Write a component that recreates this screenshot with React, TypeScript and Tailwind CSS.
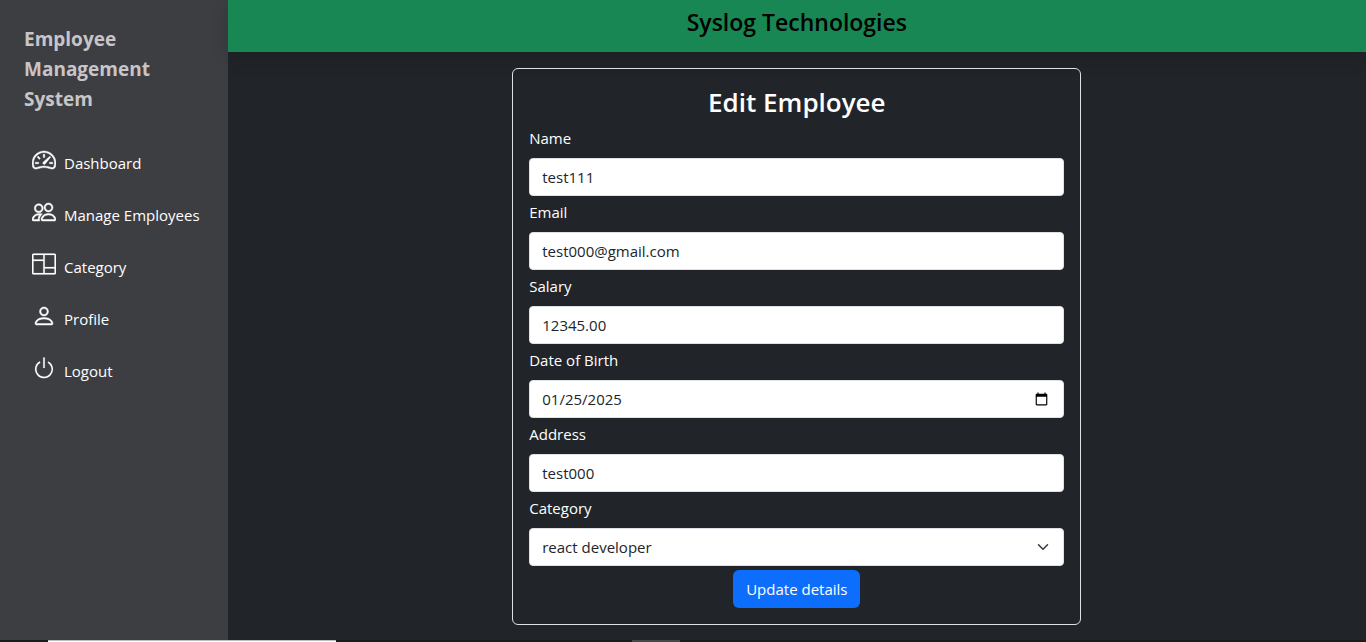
import { useState } from "react";
import type { IconType } from "react-icons";
import { BsColumns, BsPeople, BsPerson, BsPower, BsSpeedometer2 } from "react-icons/bs";

const links: { label: string; Icon: IconType; weight: string }[] = [
  { label: "Dashboard", Icon: BsSpeedometer2, weight: "[stroke-width:0.3]" },
  { label: "Manage Employees", Icon: BsPeople, weight: "[stroke-width:0.3]" },
  { label: "Category", Icon: BsColumns, weight: "[stroke-width:0.1]" },
  { label: "Profile", Icon: BsPerson, weight: "[stroke-width:0.3]" },
  { label: "Logout", Icon: BsPower, weight: "[stroke-width:0.1]" },
];

const fields = [
  { id: "name", label: "Name", type: "text", value: "test111" },
  { id: "email", label: "Email", type: "email", value: "test000@gmail.com" },
  { id: "salary", label: "Salary", type: "text", value: "12345.00" },
  { id: "dob", label: "Date of Birth", type: "date", value: "2025-01-25" },
  { id: "address", label: "Address", type: "text", value: "test000" },
];

const controlClass =
  "block h-[38px] w-full rounded border border-[#dee2e6] bg-white px-3 text-[15px] leading-6 text-[#212529]";

const dateClass =
  "[&::-webkit-datetime-edit-month-field]:p-0 [&::-webkit-datetime-edit-day-field]:p-0 [&::-webkit-datetime-edit-year-field]:p-0";

function Sidebar() {
  return (
    <aside className="w-1/6 shrink-0 bg-[#3d3e42] px-6 pt-6">
      <a href="#" className="block text-[19px] leading-[30px] font-bold text-[#c8c5c9]">
        Employee Management System
      </a>
      <nav className="mt-[23px]">
        <ul>
          {links.map(({ label, Icon, weight }) => (
            <li key={label}>
              <a href="#" className="flex h-[52px] items-center gap-2 px-2 text-[15px] whitespace-nowrap text-white">
                <Icon className={`mb-1.5 size-6 shrink-0 ${weight}`} aria-hidden="true" />
                <span>{label}</span>
              </a>
            </li>
          ))}
        </ul>
      </nav>
    </aside>
  );
}

function EditForm() {
  const [category, setCategory] = useState("react developer");
  return (
    <form
      className="w-1/2 rounded-md border border-[#dee2e6] p-4 text-[15px] leading-6 text-white"
      onSubmit={(e) => e.preventDefault()}
    >
      <h3 className="mb-1.5 text-center text-[26px] leading-[35px] font-semibold">Edit Employee</h3>
      <div className="flex flex-col gap-1">
        {fields.map((f) => (
          <div key={f.id}>
            <label htmlFor={f.id} className="mb-2 block">
              {f.label}
            </label>
            <input id={f.id} type={f.type} defaultValue={f.value} className={`${controlClass} ${dateClass}`} />
          </div>
        ))}
        <div>
          <label htmlFor="category" className="mb-2 block">
            Category
          </label>
          <div className="relative">
            <select
              id="category"
              value={category}
              onChange={(e) => setCategory(e.target.value)}
              className={`${controlClass} appearance-none`}
            >
              <option>react developer</option>
            </select>
            <svg
              viewBox="0 0 16 16"
              className="pointer-events-none absolute inset-y-0 right-[15px] my-auto size-3"
              fill="none"
              stroke="#343a40"
              strokeWidth="2"
              strokeLinecap="round"
              strokeLinejoin="round"
              aria-hidden="true"
            >
              <path d="m2 5 6 6 6-6" />
            </svg>
          </div>
        </div>
        <button type="submit" className="h-[38px] self-center rounded-md bg-[#0d6efd] px-[13px] text-white">
          Update details
        </button>
      </div>
    </form>
  );
}

export default function App() {
  return (
    <div className="flex min-h-screen flex-col bg-[#212529] font-['Open_Sans','Noto_Sans',sans-serif]">
      <div className="flex grow">
        <Sidebar />
        <div className="flex min-w-0 grow flex-col">
          <header className="bg-[#198754] px-2 pt-2 pb-[15px] text-center shadow-[0_8px_16px_rgba(0,0,0,0.15)]">
            <h4 className="text-[23px] leading-[29px] font-semibold text-black">Syslog Technologies</h4>
          </header>
          <main className="flex justify-center pt-4 pb-[15px]">
            <EditForm />
          </main>
        </div>
      </div>
      <footer className="flex h-[2px] bg-[#1e1b1c]">
        <div className="ml-12 w-72 border-t border-[#bdbdbd] bg-white" />
        <div className="ml-[296px] w-12 bg-[#4a4748]" />
      </footer>
    </div>
  );
}
